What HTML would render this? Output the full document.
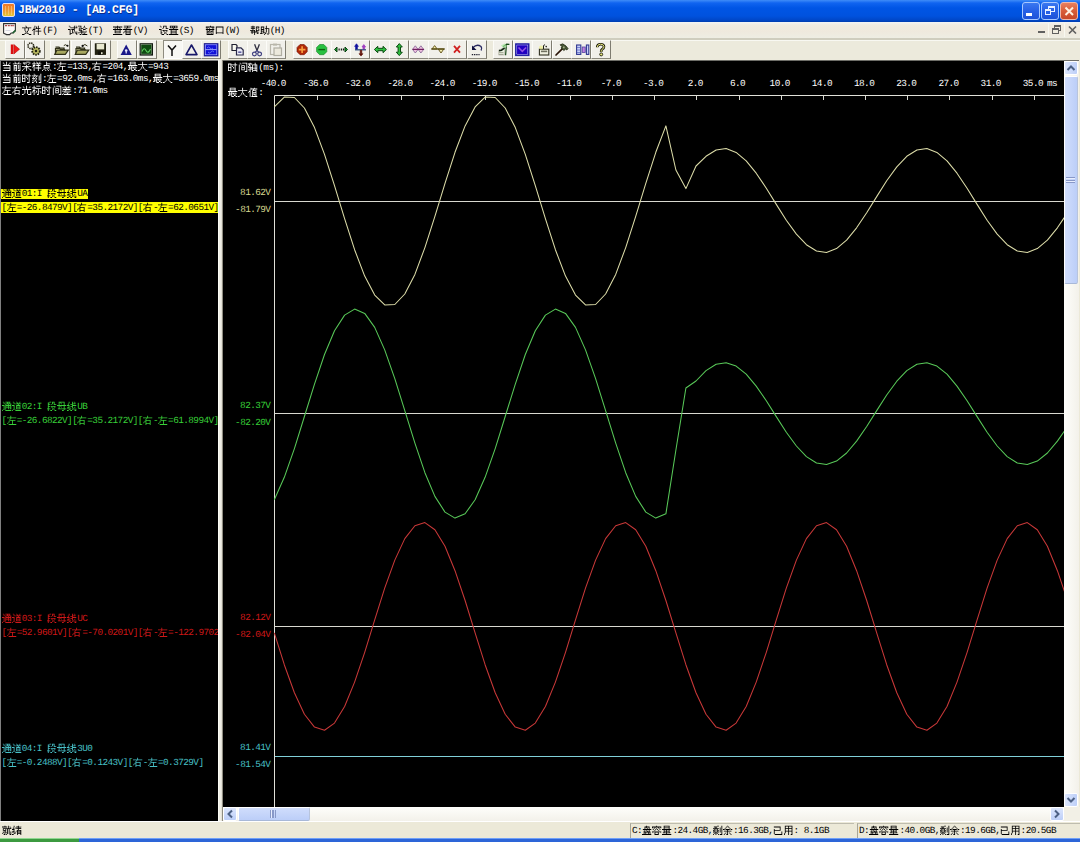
<!DOCTYPE html><html><head><meta charset="utf-8"><style>
*{margin:0;padding:0;box-sizing:border-box}
html,body{text-rendering:geometricPrecision;width:1080px;height:842px;overflow:hidden;background:#ECE9D8;font-family:"Liberation Sans",sans-serif}
.abs{position:absolute}
.t{position:absolute;white-space:pre;height:12px;line-height:12px;font-size:10px;font-family:"Liberation Mono",monospace}
.t svg.cj{display:inline-block;width:10.12px;height:12px;vertical-align:top;fill:currentColor}
.t .a{font-size:9.4px;letter-spacing:-0.58px;vertical-align:top;line-height:12px}
.btn{position:absolute;top:40px;width:20px;height:19px;background:#F1F0EA;border-right:1px solid #7E7C70;border-bottom:1px solid #8A887C;border-top:1px solid #FAFAF6;border-left:1px solid #FCFCF8}
#b7{background:#F8F8F4;border-top-color:#8E8C80;border-left-color:#8E8C80;border-right-color:#FFFFFF;border-bottom-color:#FFFFFF}
.btn svg{position:absolute;left:1px;top:1px}
</style></head><body>
<div class="abs" style="left:0;top:0;width:1080px;height:22px;background:linear-gradient(#3F8CF8 0px,#1064F0 3px,#0055E5 8px,#0052DE 16px,#0047C8 20px,#003CB0 22px)"></div>
<div class="abs" style="left:2px;top:3px;width:13px;height:14px;border:1px solid #E8E0F0;border-radius:2px;background:linear-gradient(#F07828,#F09830 55%,#E0C838)"><div class="abs" style="left:2px;top:2px;width:8px;height:9px;background:repeating-linear-gradient(90deg,rgba(255,220,160,.5) 0 1px,transparent 1px 3px)"></div></div>
<div class="abs" style="left:18px;top:2.6px;color:#fff;font:bold 11.6px/16px 'Liberation Mono',monospace;letter-spacing:-0.24px;white-space:pre;text-shadow:0.6px 0.6px 0 #0A2A8A">JBW2010 - [AB.CFG]</div>
<div class="abs" style="left:1022px;top:2px;width:18px;height:18px;border:1px solid #A8C8FF;border-radius:3px;background:linear-gradient(#3A78F0,#2660E6 50%,#1D52D8)"><div class="abs" style="left:3px;top:10px;width:6px;height:3px;background:#fff"></div></div>
<div class="abs" style="left:1041px;top:2px;width:18px;height:18px;border:1px solid #A8C8FF;border-radius:3px;background:linear-gradient(#3A78F0,#2660E6 50%,#1D52D8)"><div class="abs" style="left:6px;top:3px;width:7px;height:6px;border:1px solid #E8F0FF;border-top-width:2px"></div><div class="abs" style="left:3px;top:6px;width:6px;height:6px;border:1px solid #E8F0FF;border-top-width:2px;background:#2660E6"></div></div>
<div class="abs" style="left:1060px;top:2px;width:18px;height:18px;border:1px solid #F0B8A8;border-radius:3px;background:linear-gradient(#E88060,#D85C38 50%,#C84828)"><svg class="abs" style="left:2px;top:2px" width="12" height="12"><path d="M2.5 2.5L10 10M10 2.5L2.5 10" stroke="#FFF0E0" stroke-width="2"/></svg></div>
<div class="abs" style="left:0;top:22px;width:1080px;height:17px;background:linear-gradient(#F2F4F6 0px,#F1EBE0 3px,#EFE9DD 9px,#EEEDE3 16px);border-bottom:1px solid #CFCDBE"></div>
<svg class="abs" style="left:0;top:20px" width="20" height="18" viewBox="0 20 20 18"><path d="M3.6 23.6H15.4V30.6L13 33H11.2L9.6 34.6H6.6L3.6 33.2Z" fill="#FCFAF8" stroke="#303030" stroke-width="1.1"/><path d="M5 25.6h2M7.8 25.6h2M10.6 25.6h2.2M13.2 25.6h1" stroke="#B04848" stroke-width="1.3"/><path d="M5.5 30.5h5" stroke="#D8D8E0" stroke-width="1"/><path d="M12.6 33.2L15.6 30.4" stroke="#206030" stroke-width="1.6"/></svg>
<div class="t" style="left:22.0px;top:24.6px;color:#000;"><svg class="cj" viewBox="0 0.6 12 14.2"><use href="#u6587"/></svg><svg class="cj" viewBox="0 0.6 12 14.2"><use href="#u4ef6"/></svg><span class="a">(F)</span></div>
<div class="t" style="left:67.5px;top:24.6px;color:#000;"><svg class="cj" viewBox="0 0.6 12 14.2"><use href="#u8bd5"/></svg><svg class="cj" viewBox="0 0.6 12 14.2"><use href="#u9a8c"/></svg><span class="a">(T)</span></div>
<div class="t" style="left:112.5px;top:24.6px;color:#000;"><svg class="cj" viewBox="0 0.6 12 14.2"><use href="#u67e5"/></svg><svg class="cj" viewBox="0 0.6 12 14.2"><use href="#u770b"/></svg><span class="a">(V)</span></div>
<div class="t" style="left:158.5px;top:24.6px;color:#000;"><svg class="cj" viewBox="0 0.6 12 14.2"><use href="#u8bbe"/></svg><svg class="cj" viewBox="0 0.6 12 14.2"><use href="#u7f6e"/></svg><span class="a">(S)</span></div>
<div class="t" style="left:204.5px;top:24.6px;color:#000;"><svg class="cj" viewBox="0 0.6 12 14.2"><use href="#u7a97"/></svg><svg class="cj" viewBox="0 0.6 12 14.2"><use href="#u53e3"/></svg><span class="a">(W)</span></div>
<div class="t" style="left:249.5px;top:24.6px;color:#000;"><svg class="cj" viewBox="0 0.6 12 14.2"><use href="#u5e2e"/></svg><svg class="cj" viewBox="0 0.6 12 14.2"><use href="#u52a9"/></svg><span class="a">(H)</span></div>
<div class="abs" style="left:1038px;top:31px;width:7px;height:2px;background:#606060"></div>
<div class="abs" style="left:1054px;top:25px;width:7px;height:6px;border:1px solid #606060;border-top-width:2px"></div><div class="abs" style="left:1052px;top:28px;width:7px;height:6px;border:1px solid #606060;border-top-width:2px;background:#EFECE0"></div>
<svg class="abs" style="left:1068px;top:25px" width="9" height="9"><path d="M1 1.5L8 8.5M8 1.5L1 8.5" stroke="#606060" stroke-width="1.6"/></svg>
<div class="abs" style="left:1048px;top:23px;width:1px;height:14px;background:#F8F8F0"></div><div class="abs" style="left:1064px;top:23px;width:1px;height:14px;background:#F8F8F0"></div>
<div class="abs" style="left:0;top:39px;width:1080px;height:21px;background:#ECEADC;border-top:1px solid #CFCDBE"></div><div class="abs" style="left:0;top:40px;width:1080px;height:1px;background:#F8F8F2"></div>
<div class="btn" style="left:5px" id="b0"></div>
<div class="btn" style="left:25px" id="b1"></div>
<div class="btn" style="left:50px" id="b2"></div>
<div class="btn" style="left:71px" id="b3"></div>
<div class="btn" style="left:91px" id="b4"></div>
<div class="btn" style="left:117px" id="b5"></div>
<div class="btn" style="left:137px" id="b6"></div>
<div class="btn" style="left:163px" id="b7"></div>
<div class="btn" style="left:182px" id="b8"></div>
<div class="btn" style="left:201px" id="b9"></div>
<div class="btn" style="left:228px" id="b10"></div>
<div class="btn" style="left:247px" id="b11"></div>
<div class="btn" style="left:266px" id="b12"></div>
<div class="btn" style="left:293px" id="b13"></div>
<div class="btn" style="left:312px" id="b14"></div>
<div class="btn" style="left:331px" id="b15"></div>
<div class="btn" style="left:350px" id="b16"></div>
<div class="btn" style="left:370px" id="b17"></div>
<div class="btn" style="left:389px" id="b18"></div>
<div class="btn" style="left:409px" id="b19"></div>
<div class="btn" style="left:428px" id="b20"></div>
<div class="btn" style="left:447px" id="b21"></div>
<div class="btn" style="left:467px" id="b22"></div>
<div class="btn" style="left:493px" id="b23"></div>
<div class="btn" style="left:513px" id="b24"></div>
<div class="btn" style="left:532px" id="b25"></div>
<div class="btn" style="left:552px" id="b26"></div>
<div class="btn" style="left:571px" id="b27"></div>
<div class="btn" style="left:591px" id="b28"></div>
<svg class="abs" style="left:0;top:37px" width="620" height="25" viewBox="0 37 620 25"><rect x="10.8" y="44.5" width="2.4" height="9.5" fill="#D81010"/><path d="M13.8 44.5L19.5 49.2L13.8 54Z" fill="#F01818" stroke="#B00000" stroke-width="0.6"/><circle cx="30.8" cy="45.8" r="2.8" fill="none" stroke="#2A2A18" stroke-width="1.6" stroke-dasharray="1.4 0.8"/><circle cx="36" cy="51" r="3.8" fill="#B8B860" stroke="#202010" stroke-width="1.8" stroke-dasharray="1.6 0.9"/><circle cx="36" cy="51" r="1.2" fill="#202010"/><path d="M55.5 47.2h3.5l1 1h4v1.5" fill="none" stroke="#303018" stroke-width="1.3"/><path d="M55.5 48.5h4l1 1h4v3.8h-9Z" fill="#E8E8B0" stroke="#303018" stroke-width="1.2"/><path d="M56.8 50.2h11.5l-3 4.2h-10.5Z" fill="#A8A860" stroke="#303018" stroke-width="1.2"/><path d="M63.8 45.6q2-2 3.5 0.4" fill="none" stroke="#303018" stroke-width="1"/><circle cx="67.5" cy="45.8" r="1" fill="#101010"/><path d="M76.0 47.2h3.5l1 1h4v1.5" fill="none" stroke="#303018" stroke-width="1.3"/><path d="M76.0 48.5h4l1 1h4v3.8h-9Z" fill="#E8E8B0" stroke="#303018" stroke-width="1.2"/><path d="M77.3 50.2h11.5l-3 4.2h-10.5Z" fill="#A8A860" stroke="#303018" stroke-width="1.2"/><path d="M83 45.6q1.6-2.4 4.4 0.4" fill="none" stroke="#303018" stroke-width="1"/><circle cx="82.6" cy="45.9" r="1.1" fill="#101010"/><rect x="94.8" y="43.3" width="11.2" height="11.6" fill="#202010"/><rect x="96.6" y="43.8" width="7.6" height="5.6" fill="#E8E8D0"/><rect x="98.2" y="51.4" width="4.8" height="3.5" fill="#101008"/><rect x="101" y="52.2" width="1.6" height="2" fill="#E0E0C8"/><path d="M126.2 44.6L131.8 54.9H120.6Z" fill="#1A1888"/><circle cx="126.2" cy="50.6" r="1.3" fill="#E8E8FF"/><rect x="125.6" y="51.5" width="1.2" height="2" fill="#E8E8FF"/><rect x="139.6" y="43.2" width="13.4" height="12.4" fill="#101810"/><rect x="141" y="44.5" width="10.6" height="9.6" fill="#0E4A10" stroke="#A8B8A0" stroke-width="0.5"/><path d="M142 51.5q2-5 4 -1t4.5 -1.5" fill="none" stroke="#60D060" stroke-width="1.1"/><path d="M168 45.5L172 50L176 45.5M172 50V56" fill="none" stroke="#101010" stroke-width="1.5"/><path d="M191.5 45L197 54.6H186Z" fill="none" stroke="#18186A" stroke-width="1.6" stroke-linejoin="round"/><rect x="204.2" y="43.6" width="13.8" height="12.4" fill="#0A0AC8" stroke="#202080" stroke-width="0.8"/><rect x="205.4" y="44.8" width="11.4" height="10" fill="#1010D8" stroke="#C0C8FF" stroke-width="0.6"/><path d="M205.5 49.6H216.5" stroke="#C0C8FF" stroke-width="0.8"/><path d="M207 48q1.5-2 3 0t3 0M208 52q1.5 2 3 0t3 0" fill="none" stroke="#8090FF" stroke-width="0.7"/><path d="M232 44.5h4l1 1v5h-5Z" fill="#F8F8F0" stroke="#202030" stroke-width="1.2"/><path d="M236.5 47.8h4.5l2.2 2.2v5h-6.7Z" fill="#ECECF8" stroke="#282848" stroke-width="1.2"/><rect x="238.2" y="51.4" width="3.2" height="1.6" fill="#6060A0"/><path d="M254.6 44.2L257 50.5M259.4 44.2L257 50.5" stroke="#303040" stroke-width="1.3"/><circle cx="254.4" cy="54" r="1.9" fill="none" stroke="#404080" stroke-width="1.2"/><circle cx="259.6" cy="54" r="1.9" fill="none" stroke="#404080" stroke-width="1.2"/><path d="M257 50.5L255 52.5M257 50.5L259 52.5" stroke="#404080" stroke-width="1.1"/><rect x="270.5" y="44.5" width="9.5" height="10" fill="none" stroke="#B8B6AA" stroke-width="1.2"/><rect x="274" y="48" width="7.5" height="7.5" fill="#ECE9DC" stroke="#B0AEA2" stroke-width="1.2"/><rect x="273" y="43.6" width="4" height="2" fill="#B8B6AA"/><path d="M300 44.5h4.2l3 3v4.2l-3 3h-4.2l-3-3v-4.2Z" fill="#B02808" stroke="#701000" stroke-width="0.6"/><path d="M302.1 46.3V52.9M298.8 49.6H305.4" stroke="#F8A040" stroke-width="1.6"/><path d="M319.6 44.5h4.2l3 3v4.2l-3 3h-4.2l-3-3v-4.2Z" fill="#28C040" stroke="#108020" stroke-width="0.6"/><path d="M318.4 49.6H325" stroke="#0A6010" stroke-width="1.4"/><path d="M334.5 49.5l2.5-2.5v5Z M347.5 49.5l-2.5-2.5v5Z" fill="#18A030" stroke="#0A4010" stroke-width="1"/><path d="M338.5 49.5h1.2M340.8 49.5h1.4M343 49.5h1.2" stroke="#101810" stroke-width="1.8"/><path d="M356.5 43.8l-1.8 2.6h1v3h1.6v-3h1Z" fill="#1010A0" stroke="#1010A0" stroke-width="0.8"/><path d="M363.8 44.6l-1.8 2.3h1v2.5h1.6v-2.5h1Z" fill="#A040C0" stroke="#A040C0" stroke-width="0.8"/><path d="M355 49.8H366" stroke="#305080" stroke-width="1.3"/><path d="M360.2 50.2v3.5h-1.2l2 2.4l2-2.4h-1.2v-3.5Z" fill="#601008" stroke="#601008" stroke-width="0.6"/><path d="M374.4 49.5l3.4-3.2v2h5.2v-2l3.4 3.2l-3.4 3.2v-2h-5.2v2Z" fill="#30C040" stroke="#0A4A10" stroke-width="1"/><path d="M399.3 43.6l3 3.4h-1.8v5.2h1.8l-3 3.4l-3-3.4h1.8v-5.2h-1.8Z" fill="#30C040" stroke="#0A4A10" stroke-width="1"/><path d="M412.5 49.4l2.8-3.6l2.8 3.6l-2.8 3.6Z M418.1 49.4l2.8-3.6l2.8 3.6l-2.8 3.6Z" fill="#F0C0E0" stroke="#806090" stroke-width="0.8"/><path d="M412.5 49.4H424" stroke="#702060" stroke-width="1.2"/><path d="M432 49L434.6 45.6L437.2 49Z M438.2 49L441 53L443.8 49Z" fill="#F4F0B0" stroke="#6A5A20" stroke-width="1"/><path d="M431.2 49H444.8" stroke="#5A5018" stroke-width="1.4"/><path d="M454 45.8L460 52.6M460 45.8L454 52.6" stroke="#D02020" stroke-width="1.8"/><path d="M473 47.5q4-4 8 -1q1.5 2 0 4" fill="none" stroke="#282860" stroke-width="1.3"/><path d="M472 45.5v4.5h4.5Z" fill="#101040"/><path d="M471.8 54.6h1.4M474 54.6h1.4M476.2 54.6h1.4M478.4 54.6h1.2" stroke="#202030" stroke-width="1.2"/><path d="M498.6 50.5L504.5 47V55H498.6Z" fill="#E8F0E0" stroke="#A0A090" stroke-width="0.5"/><path d="M499 52.6h4.5M499 54.4h4.5" stroke="#909080" stroke-width="0.8"/><path d="M499 50.6L501.5 50.2L505 47.6" fill="none" stroke="#102010" stroke-width="1.6"/><path d="M503 46.8L506.6 44.2L509.4 44.4M506.4 45L505.6 55.2" fill="none" stroke="#184818" stroke-width="1.2"/><path d="M501 45.6l3.6-2l2.6 2.4l-3 2.4Z" fill="#A8E8A0" opacity="0.7"/><rect x="515.6" y="43.8" width="13.4" height="11.8" fill="#1A10A0" stroke="#2020A0" stroke-width="1"/><rect x="516.8" y="45" width="11" height="9.4" fill="#2000C0" stroke="#D0D0FF" stroke-width="0.5"/><path d="M518.5 47.5l3.8 3.8l3.8-3.8" fill="none" stroke="#9050E0" stroke-width="1.6"/><rect x="539.4" y="49.2" width="9.4" height="5.8" fill="#F0F0E0" stroke="#303020" stroke-width="1.1"/><rect x="541" y="50.6" width="6.2" height="1.6" fill="#707060"/><path d="M543.5 49v-3.3q0.5-1.4 1.6-0.6" fill="none" stroke="#202018" stroke-width="1"/><circle cx="546.2" cy="46.6" r="0.8" fill="#202018"/><circle cx="541" cy="47.5" r="2" fill="#F0F080" opacity="0.6"/><path d="M556 55L562.5 48.6" stroke="#2A1408" stroke-width="1.7" stroke-linecap="round"/><path d="M560.2 44.8l2.6-0.9l3.2 2.2l2 2.6l-1.2 1.2l-1.4-0.8l-1.6 1.4l-2.6-2.6l0.8-1.2Z" fill="#485838" stroke="#20280F" stroke-width="0.9"/><rect x="563" y="46.6" width="1.6" height="1.6" fill="#A8B088"/><rect x="576.6" y="45" width="4.2" height="9.4" fill="#C8D0F8" stroke="#303890" stroke-width="1.1"/><rect x="582.2" y="47" width="3" height="5.4" fill="#C080E0" stroke="#5040A0" stroke-width="0.8"/><rect x="586.4" y="45" width="2.4" height="9.4" fill="#C8D0F8" stroke="#303890" stroke-width="1.1"/><path d="M577 47.5h3.5M577 50h3.5M577 52.5h3.5" stroke="#5060C0" stroke-width="0.7"/><path d="M597.2 47.2q0-3 3.4-3t3.4 2.6q0 1.6-2 2.6q-0.8 0.5-0.8 1.8v0.8" fill="none" stroke="#181808" stroke-width="2.6"/><path d="M597.2 47.2q0-3 3.4-3t3.4 2.6q0 1.6-2 2.6q-0.8 0.5-0.8 1.8v0.8" fill="none" stroke="#E8E880" stroke-width="1"/><circle cx="601.2" cy="54.4" r="1.5" fill="#E8E880" stroke="#181808" stroke-width="0.9"/></svg>
<div class="abs" style="left:0;top:60px;width:218px;height:761px;background:#000;border-top:1px solid #808080;border-left:1px solid #808080"></div>
<div class="t" style="left:1.5px;top:61.0px;color:#fff;"><svg class="cj" viewBox="0 0.6 12 14.2"><use href="#u5f53"/></svg><svg class="cj" viewBox="0 0.6 12 14.2"><use href="#u524d"/></svg><svg class="cj" viewBox="0 0.6 12 14.2"><use href="#u91c7"/></svg><svg class="cj" viewBox="0 0.6 12 14.2"><use href="#u6837"/></svg><svg class="cj" viewBox="0 0.6 12 14.2"><use href="#u70b9"/></svg><span class="a">:</span><svg class="cj" viewBox="0 0.6 12 14.2"><use href="#u5de6"/></svg><span class="a">=133,</span><svg class="cj" viewBox="0 0.6 12 14.2"><use href="#u53f3"/></svg><span class="a">=204,</span><svg class="cj" viewBox="0 0.6 12 14.2"><use href="#u6700"/></svg><svg class="cj" viewBox="0 0.6 12 14.2"><use href="#u5927"/></svg><span class="a">=943</span></div>
<div class="t" style="left:1.5px;top:73.2px;color:#fff;"><svg class="cj" viewBox="0 0.6 12 14.2"><use href="#u5f53"/></svg><svg class="cj" viewBox="0 0.6 12 14.2"><use href="#u524d"/></svg><svg class="cj" viewBox="0 0.6 12 14.2"><use href="#u65f6"/></svg><svg class="cj" viewBox="0 0.6 12 14.2"><use href="#u523b"/></svg><span class="a">:</span><svg class="cj" viewBox="0 0.6 12 14.2"><use href="#u5de6"/></svg><span class="a">=92.0ms,</span><svg class="cj" viewBox="0 0.6 12 14.2"><use href="#u53f3"/></svg><span class="a">=163.0ms,</span><svg class="cj" viewBox="0 0.6 12 14.2"><use href="#u6700"/></svg><svg class="cj" viewBox="0 0.6 12 14.2"><use href="#u5927"/></svg><span class="a">=3659.0ms</span></div>
<div class="t" style="left:1.5px;top:85.4px;color:#fff;"><svg class="cj" viewBox="0 0.6 12 14.2"><use href="#u5de6"/></svg><svg class="cj" viewBox="0 0.6 12 14.2"><use href="#u53f3"/></svg><svg class="cj" viewBox="0 0.6 12 14.2"><use href="#u5149"/></svg><svg class="cj" viewBox="0 0.6 12 14.2"><use href="#u6807"/></svg><svg class="cj" viewBox="0 0.6 12 14.2"><use href="#u65f6"/></svg><svg class="cj" viewBox="0 0.6 12 14.2"><use href="#u95f4"/></svg><svg class="cj" viewBox="0 0.6 12 14.2"><use href="#u5dee"/></svg><span class="a">:71.0ms</span></div>
<div class="abs" style="left:1px;top:189.0px;width:86.5px;height:10px;background:#FFFF00"></div>
<div class="abs" style="left:1px;top:202.0px;width:217px;height:11px;background:#FFFF00"></div>
<div class="t" style="left:1.5px;top:188.0px;color:#000;"><svg class="cj" viewBox="0 0.6 12 14.2"><use href="#u901a"/></svg><svg class="cj" viewBox="0 0.6 12 14.2"><use href="#u9053"/></svg><span class="a">01:I </span><svg class="cj" viewBox="0 0.6 12 14.2"><use href="#u6bb5"/></svg><svg class="cj" viewBox="0 0.6 12 14.2"><use href="#u6bcd"/></svg><svg class="cj" viewBox="0 0.6 12 14.2"><use href="#u7ebf"/></svg><span class="a">UA</span></div>
<div class="t" style="left:1.5px;top:201.5px;color:#000;"><span class="a">[</span><svg class="cj" viewBox="0 0.6 12 14.2"><use href="#u5de6"/></svg><span class="a">=-26.8479V][</span><svg class="cj" viewBox="0 0.6 12 14.2"><use href="#u53f3"/></svg><span class="a">=35.2172V][</span><svg class="cj" viewBox="0 0.6 12 14.2"><use href="#u53f3"/></svg><span class="a">-</span><svg class="cj" viewBox="0 0.6 12 14.2"><use href="#u5de6"/></svg><span class="a">=62.0651V]</span></div>
<div class="t" style="left:1.5px;top:400.6px;color:#38D038;"><svg class="cj" viewBox="0 0.6 12 14.2"><use href="#u901a"/></svg><svg class="cj" viewBox="0 0.6 12 14.2"><use href="#u9053"/></svg><span class="a">02:I </span><svg class="cj" viewBox="0 0.6 12 14.2"><use href="#u6bb5"/></svg><svg class="cj" viewBox="0 0.6 12 14.2"><use href="#u6bcd"/></svg><svg class="cj" viewBox="0 0.6 12 14.2"><use href="#u7ebf"/></svg><span class="a">UB</span></div>
<div class="t" style="left:1.5px;top:414.6px;color:#38D038;"><span class="a">[</span><svg class="cj" viewBox="0 0.6 12 14.2"><use href="#u5de6"/></svg><span class="a">=-26.6822V][</span><svg class="cj" viewBox="0 0.6 12 14.2"><use href="#u53f3"/></svg><span class="a">=35.2172V][</span><svg class="cj" viewBox="0 0.6 12 14.2"><use href="#u53f3"/></svg><span class="a">-</span><svg class="cj" viewBox="0 0.6 12 14.2"><use href="#u5de6"/></svg><span class="a">=61.8994V]</span></div>
<div class="t" style="left:1.5px;top:613.4px;color:#D01818;"><svg class="cj" viewBox="0 0.6 12 14.2"><use href="#u901a"/></svg><svg class="cj" viewBox="0 0.6 12 14.2"><use href="#u9053"/></svg><span class="a">03:I </span><svg class="cj" viewBox="0 0.6 12 14.2"><use href="#u6bb5"/></svg><svg class="cj" viewBox="0 0.6 12 14.2"><use href="#u6bcd"/></svg><svg class="cj" viewBox="0 0.6 12 14.2"><use href="#u7ebf"/></svg><span class="a">UC</span></div>
<div class="t" style="left:1.5px;top:627.4px;color:#D01818;"><span class="a">[</span><svg class="cj" viewBox="0 0.6 12 14.2"><use href="#u5de6"/></svg><span class="a">=52.9601V][</span><svg class="cj" viewBox="0 0.6 12 14.2"><use href="#u53f3"/></svg><span class="a">=-70.0201V][</span><svg class="cj" viewBox="0 0.6 12 14.2"><use href="#u53f3"/></svg><span class="a">-</span><svg class="cj" viewBox="0 0.6 12 14.2"><use href="#u5de6"/></svg><span class="a">=-122.9702V]</span></div>
<div class="t" style="left:1.5px;top:743.1px;color:#48C0C8;"><svg class="cj" viewBox="0 0.6 12 14.2"><use href="#u901a"/></svg><svg class="cj" viewBox="0 0.6 12 14.2"><use href="#u9053"/></svg><span class="a">04:I </span><svg class="cj" viewBox="0 0.6 12 14.2"><use href="#u6bb5"/></svg><svg class="cj" viewBox="0 0.6 12 14.2"><use href="#u6bcd"/></svg><svg class="cj" viewBox="0 0.6 12 14.2"><use href="#u7ebf"/></svg><span class="a">3U0</span></div>
<div class="t" style="left:1.5px;top:757.1px;color:#48C0C8;"><span class="a">[</span><svg class="cj" viewBox="0 0.6 12 14.2"><use href="#u5de6"/></svg><span class="a">=-0.2488V][</span><svg class="cj" viewBox="0 0.6 12 14.2"><use href="#u53f3"/></svg><span class="a">=0.1243V][</span><svg class="cj" viewBox="0 0.6 12 14.2"><use href="#u53f3"/></svg><span class="a">-</span><svg class="cj" viewBox="0 0.6 12 14.2"><use href="#u5de6"/></svg><span class="a">=0.3729V]</span></div>
<div class="abs" style="left:218px;top:60px;width:5px;height:762px;background:linear-gradient(90deg,#FCFCF6 0 1px,#F0EFE6 1px 3px,#E4E2D8 3px 4px,#8E8C80 4px 5px)"></div>
<div class="abs" style="left:223px;top:60px;width:841px;height:747px;background:#000;border-top:1px solid #808080"></div>
<svg class="abs" style="left:223px;top:60px" width="841" height="747" shape-rendering="auto"><path d="M51.5 35.5H841 M51.5 35.5V747" stroke="#E0E0D8" stroke-width="1" fill="none"/><path d="M94.5 35.5V40.0" stroke="#D8D8D0" stroke-width="1"/><path d="M136.5 35.5V40.0" stroke="#D8D8D0" stroke-width="1"/><path d="M178.5 35.5V40.0" stroke="#D8D8D0" stroke-width="1"/><path d="M220.5 35.5V40.0" stroke="#D8D8D0" stroke-width="1"/><path d="M262.5 35.5V40.0" stroke="#D8D8D0" stroke-width="1"/><path d="M304.5 35.5V40.0" stroke="#D8D8D0" stroke-width="1"/><path d="M347.5 35.5V40.0" stroke="#D8D8D0" stroke-width="1"/><path d="M389.5 35.5V40.0" stroke="#D8D8D0" stroke-width="1"/><path d="M431.5 35.5V40.0" stroke="#D8D8D0" stroke-width="1"/><path d="M473.5 35.5V40.0" stroke="#D8D8D0" stroke-width="1"/><path d="M516.5 35.5V40.0" stroke="#D8D8D0" stroke-width="1"/><path d="M558.5 35.5V40.0" stroke="#D8D8D0" stroke-width="1"/><path d="M600.5 35.5V40.0" stroke="#D8D8D0" stroke-width="1"/><path d="M642.5 35.5V40.0" stroke="#D8D8D0" stroke-width="1"/><path d="M684.5 35.5V40.0" stroke="#D8D8D0" stroke-width="1"/><path d="M726.5 35.5V40.0" stroke="#D8D8D0" stroke-width="1"/><path d="M769.5 35.5V40.0" stroke="#D8D8D0" stroke-width="1"/><path d="M811.5 35.5V40.0" stroke="#D8D8D0" stroke-width="1"/><path d="M52.0 141.5H841" stroke="#D8D8D0" stroke-width="1"/><path d="M52.0 353.5H841" stroke="#D8D8D0" stroke-width="1"/><path d="M52.0 566.5H841" stroke="#D8D8D0" stroke-width="1"/><path d="M52.0 696.5H841" stroke="#D8D8D0" stroke-width="1"/><path d="M51.3 46.9 L61.3 37.1 L71.4 37.5 L81.4 48.0 L91.5 67.6 L101.5 94.4 L111.5 125.7 L121.6 158.6 L131.6 189.7 L141.7 216.1 L151.7 235.1 L161.7 244.9 L171.8 244.5 L181.8 234.0 L191.9 214.4 L201.9 187.6 L211.9 156.3 L222.0 123.4 L232.0 92.3 L242.1 65.9 L252.1 46.9 L262.1 37.1 L272.2 37.5 L282.2 48.0 L292.3 67.6 L302.3 94.4 L312.3 125.7 L322.4 158.6 L332.4 189.7 L342.5 216.1 L352.5 235.1 L362.5 244.9 L372.6 244.5 L382.6 234.0 L392.7 214.4 L402.7 187.6 L412.7 156.3 L422.8 123.4 L432.8 92.3 L442.9 65.9 L452.9 110.0 L462.9 128.6 L473.0 106.0 L483.0 96.3 L493.1 90.0 L503.1 88.6 L513.1 92.4 L523.2 100.8 L533.2 113.2 L543.3 128.2 L553.3 144.4 L563.3 160.2 L573.4 174.1 L583.4 184.7 L593.5 191.0 L603.5 192.4 L613.5 188.6 L623.6 180.2 L633.6 167.8 L643.7 152.8 L653.7 136.6 L663.7 120.8 L673.8 106.9 L683.8 96.3 L693.9 90.0 L703.9 88.6 L713.9 92.4 L724.0 100.8 L734.0 113.2 L744.1 128.2 L754.1 144.4 L764.1 160.2 L774.2 174.1 L784.2 184.7 L794.3 191.0 L804.3 192.4 L814.3 188.6 L824.4 180.2 L834.4 167.8 L844.5 152.8" stroke="#DCDCA8" stroke-width="1.05" fill="none" stroke-linejoin="round"/><path d="M51.3 439.8 L61.3 417.3 L71.4 388.6 L81.4 356.5 L91.5 324.1 L101.5 294.5 L111.5 270.8 L121.6 255.1 L131.6 249.1 L141.7 253.4 L151.7 267.4 L161.7 289.9 L171.8 318.6 L181.8 350.7 L191.9 383.1 L201.9 412.7 L211.9 436.4 L222.0 452.1 L232.0 458.1 L242.1 453.8 L252.1 439.8 L262.1 417.3 L272.2 388.6 L282.2 356.5 L292.3 324.1 L302.3 294.5 L312.3 270.8 L322.4 255.1 L332.4 249.1 L342.5 253.4 L352.5 267.4 L362.5 289.9 L372.6 318.6 L382.6 350.7 L392.7 383.1 L402.7 412.7 L412.7 436.4 L422.8 452.1 L432.8 458.1 L442.9 453.8 L452.9 390.0 L462.9 328.0 L473.0 321.0 L483.0 310.6 L493.1 304.2 L503.1 302.7 L513.1 306.1 L523.2 314.2 L533.2 326.1 L543.3 340.7 L553.3 356.6 L563.3 372.2 L573.4 386.0 L583.4 396.6 L593.5 403.0 L603.5 404.5 L613.5 401.1 L623.6 393.0 L633.6 381.1 L643.7 366.5 L653.7 350.6 L663.7 335.0 L673.8 321.2 L683.8 310.6 L693.9 304.2 L703.9 302.7 L713.9 306.1 L724.0 314.2 L734.0 326.1 L744.1 340.7 L754.1 356.6 L764.1 372.2 L774.2 386.0 L784.2 396.6 L794.3 403.0 L804.3 404.5 L814.3 401.1 L824.4 393.0 L834.4 381.1 L844.5 366.5" stroke="#58C858" stroke-width="1.05" fill="none" stroke-linejoin="round"/><path d="M51.3 572.9 L61.3 604.7 L71.4 632.7 L81.4 654.2 L91.5 667.1 L101.5 670.2 L111.5 663.1 L121.6 646.5 L131.6 622.1 L141.7 592.3 L151.7 559.9 L161.7 528.1 L171.8 500.1 L181.8 478.6 L191.9 465.7 L201.9 462.6 L211.9 469.7 L222.0 486.3 L232.0 510.7 L242.1 540.5 L252.1 572.9 L262.1 604.7 L272.2 632.7 L282.2 654.2 L292.3 667.1 L302.3 670.2 L312.3 663.1 L322.4 646.5 L332.4 622.1 L342.5 592.3 L352.5 559.9 L362.5 528.1 L372.6 500.1 L382.6 478.6 L392.7 465.7 L402.7 462.6 L412.7 469.7 L422.8 486.3 L432.8 510.7 L442.9 540.5 L452.9 572.9 L462.9 604.7 L473.0 632.7 L483.0 654.2 L493.1 667.1 L503.1 670.2 L513.1 663.1 L523.2 646.5 L533.2 622.1 L543.3 592.3 L553.3 559.9 L563.3 528.1 L573.4 500.1 L583.4 478.6 L593.5 465.7 L603.5 462.6 L613.5 469.7 L623.6 486.3 L633.6 510.7 L643.7 540.5 L653.7 572.9 L663.7 604.7 L673.8 632.7 L683.8 654.2 L693.9 667.1 L703.9 670.2 L713.9 663.1 L724.0 646.5 L734.0 622.1 L744.1 592.3 L754.1 559.9 L764.1 528.1 L774.2 500.1 L784.2 478.6 L794.3 465.7 L804.3 462.6 L814.3 469.7 L824.4 486.3 L834.4 510.7 L844.5 540.5" stroke="#C83838" stroke-width="1.05" fill="none" stroke-linejoin="round"/><path d="M52.0 696.5H841" stroke="#80D0D8" stroke-width="1"/></svg>
<div class="t" style="left:228.0px;top:62.0px;color:#fff;"><svg class="cj" viewBox="0 0.6 12 14.2"><use href="#u65f6"/></svg><svg class="cj" viewBox="0 0.6 12 14.2"><use href="#u95f4"/></svg><svg class="cj" viewBox="0 0.6 12 14.2"><use href="#u8f74"/></svg><span class="a">(ms):</span></div>
<div class="t" style="left:228.0px;top:87.0px;color:#fff;"><svg class="cj" viewBox="0 0.6 12 14.2"><use href="#u6700"/></svg><svg class="cj" viewBox="0 0.6 12 14.2"><use href="#u5927"/></svg><svg class="cj" viewBox="0 0.6 12 14.2"><use href="#u503c"/></svg><span class="a">:</span></div>
<div class="t" style="left:260.7px;top:77.5px;color:#fff;"><span class="a">-40.0</span></div>
<div class="t" style="left:302.9px;top:77.5px;color:#fff;"><span class="a">-36.0</span></div>
<div class="t" style="left:345.1px;top:77.5px;color:#fff;"><span class="a">-32.0</span></div>
<div class="t" style="left:387.3px;top:77.5px;color:#fff;"><span class="a">-28.0</span></div>
<div class="t" style="left:429.5px;top:77.5px;color:#fff;"><span class="a">-24.0</span></div>
<div class="t" style="left:471.7px;top:77.5px;color:#fff;"><span class="a">-19.0</span></div>
<div class="t" style="left:513.9px;top:77.5px;color:#fff;"><span class="a">-15.0</span></div>
<div class="t" style="left:556.1px;top:77.5px;color:#fff;"><span class="a">-11.0</span></div>
<div class="t" style="left:600.8px;top:77.5px;color:#fff;"><span class="a">-7.0</span></div>
<div class="t" style="left:643.0px;top:77.5px;color:#fff;"><span class="a">-3.0</span></div>
<div class="t" style="left:687.7px;top:77.5px;color:#fff;"><span class="a">2.0</span></div>
<div class="t" style="left:729.9px;top:77.5px;color:#fff;"><span class="a">6.0</span></div>
<div class="t" style="left:769.6px;top:77.5px;color:#fff;"><span class="a">10.0</span></div>
<div class="t" style="left:811.8px;top:77.5px;color:#fff;"><span class="a">14.0</span></div>
<div class="t" style="left:854.0px;top:77.5px;color:#fff;"><span class="a">18.0</span></div>
<div class="t" style="left:896.2px;top:77.5px;color:#fff;"><span class="a">23.0</span></div>
<div class="t" style="left:938.4px;top:77.5px;color:#fff;"><span class="a">27.0</span></div>
<div class="t" style="left:980.6px;top:77.5px;color:#fff;"><span class="a">31.0</span></div>
<div class="t" style="left:1022.8px;top:77.5px;color:#fff;"><span class="a">35.0</span></div>
<div class="t" style="left:1047.0px;top:77.5px;color:#fff;"><span class="a">ms</span></div>
<div class="t" style="left:240.1px;top:187.0px;color:#D8D890;"><span class="a">81.62V</span></div>
<div class="t" style="left:235.1px;top:204.0px;color:#D8D890;"><span class="a">-81.79V</span></div>
<div class="t" style="left:240.1px;top:399.6px;color:#38D038;"><span class="a">82.37V</span></div>
<div class="t" style="left:235.1px;top:416.6px;color:#38D038;"><span class="a">-82.20V</span></div>
<div class="t" style="left:240.1px;top:612.4px;color:#D01818;"><span class="a">82.12V</span></div>
<div class="t" style="left:235.1px;top:629.4px;color:#D01818;"><span class="a">-82.04V</span></div>
<div class="t" style="left:240.1px;top:742.1px;color:#48C0C8;"><span class="a">81.41V</span></div>
<div class="t" style="left:235.1px;top:759.1px;color:#48C0C8;"><span class="a">-81.54V</span></div>
<div class="abs" style="left:1064px;top:61px;width:15px;height:746px;background:linear-gradient(90deg,#FEFEFB,#F3F1EA)"></div>
<div class="abs" style="left:1064px;top:61px;width:14px;height:14px;border:1px solid #fff;border-radius:2px;background:linear-gradient(90deg,#DCE6FD,#BDCFF8)"></div>
<svg class="abs" style="left:1066px;top:64px" width="10" height="8"><path d="M1.5 6L5 2.5L8.5 6" stroke="#4D6185" stroke-width="2" fill="none"/></svg>
<div class="abs" style="left:1064px;top:76px;width:14px;height:208px;border:1px solid #fff;border-radius:2px;border-right-color:#B8C4DC;border-bottom-color:#A8B8D8;background:linear-gradient(90deg,#D0DDFC,#BCCEF8)"></div>
<div class="abs" style="left:1066px;top:177px;width:9px;height:6px;background:repeating-linear-gradient(#8898C8 0 1px,#E8EEFF 1px 2px,transparent 2px 2.5px)"></div>
<div class="abs" style="left:1064px;top:793px;width:14px;height:14px;border:1px solid #fff;border-radius:2px;background:linear-gradient(90deg,#DCE6FD,#BDCFF8)"></div>
<svg class="abs" style="left:1066px;top:796px" width="10" height="8"><path d="M1.5 2L5 5.5L8.5 2" stroke="#4D6185" stroke-width="2" fill="none"/></svg>
<div class="abs" style="left:223px;top:807px;width:841px;height:14px;background:linear-gradient(#FEFEFB,#F3F1EA)"></div>
<div class="abs" style="left:223px;top:807px;width:14px;height:14px;border:1px solid #fff;border-radius:2px;background:linear-gradient(#DCE6FD,#BDCFF8)"></div>
<svg class="abs" style="left:226px;top:809px" width="8" height="10"><path d="M6 1.5L2.5 5L6 8.5" stroke="#4D6185" stroke-width="2" fill="none"/></svg>
<div class="abs" style="left:238px;top:807px;width:72px;height:14px;border:1px solid #fff;border-radius:2px;border-right-color:#B8C4DC;border-bottom-color:#A8B8D8;background:linear-gradient(#D0DDFC,#BCCEF8)"></div>
<div class="abs" style="left:270px;top:810px;width:6px;height:8px;background:repeating-linear-gradient(90deg,#8898C8 0 1px,#E8EEFF 1px 2px,transparent 2px 2.5px)"></div>
<div class="abs" style="left:1050px;top:807px;width:14px;height:14px;border:1px solid #fff;border-radius:2px;background:linear-gradient(#DCE6FD,#BDCFF8)"></div>
<svg class="abs" style="left:1053px;top:809px" width="8" height="10"><path d="M2 1.5L5.5 5L2 8.5" stroke="#4D6185" stroke-width="2" fill="none"/></svg>
<div class="abs" style="left:1064px;top:807px;width:16px;height:14px;background:#F2F0E6"></div>
<div class="abs" style="left:223px;top:60px;width:856px;height:1px;background:#6E6E68"></div>
<div class="abs" style="left:0;top:821px;width:1080px;height:17px;background:#ECE9D8;border-top:1px solid #FFFFFF"></div>
<div class="t" style="left:1.5px;top:824.5px;color:#000;"><svg class="cj" viewBox="0 0.6 12 14.2"><use href="#u5c31"/></svg><svg class="cj" viewBox="0 0.6 12 14.2"><use href="#u7eea"/></svg></div>
<div class="abs" style="left:630px;top:823px;width:224px;height:15px;border-left:1px solid #A8A698;border-top:1px solid #BEBCAE"></div>
<div class="abs" style="left:857px;top:823px;width:223px;height:15px;border-left:1px solid #A8A698;border-top:1px solid #BEBCAE"></div>
<div class="t" style="left:632.0px;top:825.0px;color:#000;"><span class="a">C:</span><svg class="cj" viewBox="0 0.6 12 14.2"><use href="#u76d8"/></svg><svg class="cj" viewBox="0 0.6 12 14.2"><use href="#u5bb9"/></svg><svg class="cj" viewBox="0 0.6 12 14.2"><use href="#u91cf"/></svg><span class="a">:24.4GB,</span><svg class="cj" viewBox="0 0.6 12 14.2"><use href="#u5269"/></svg><svg class="cj" viewBox="0 0.6 12 14.2"><use href="#u4f59"/></svg><span class="a">:16.3GB,</span><svg class="cj" viewBox="0 0.6 12 14.2"><use href="#u5df2"/></svg><svg class="cj" viewBox="0 0.6 12 14.2"><use href="#u7528"/></svg><span class="a">: 8.1GB</span></div>
<div class="t" style="left:859.0px;top:825.0px;color:#000;"><span class="a">D:</span><svg class="cj" viewBox="0 0.6 12 14.2"><use href="#u76d8"/></svg><svg class="cj" viewBox="0 0.6 12 14.2"><use href="#u5bb9"/></svg><svg class="cj" viewBox="0 0.6 12 14.2"><use href="#u91cf"/></svg><span class="a">:40.0GB,</span><svg class="cj" viewBox="0 0.6 12 14.2"><use href="#u5269"/></svg><svg class="cj" viewBox="0 0.6 12 14.2"><use href="#u4f59"/></svg><span class="a">:19.6GB,</span><svg class="cj" viewBox="0 0.6 12 14.2"><use href="#u5df2"/></svg><svg class="cj" viewBox="0 0.6 12 14.2"><use href="#u7528"/></svg><span class="a">:20.5GB</span></div>
<div class="abs" style="left:0;top:838px;width:1080px;height:4px;background:#2D65D8;border-top:1px solid #6FA0F8"></div>
<div class="abs" style="left:0;top:838px;width:79px;height:4px;background:#3C9A40;border-top:1px solid #90D890"></div>
<svg width="0" height="0" style="position:absolute"><defs><symbol id="u4ef6" viewBox="0 0.6 12 14.2"><path d="M3 2h1v1h-1zM7 2h1v1h-1zM3 3h1v1h-1zM5 3h1v1h-1zM7 3h1v1h-1zM2 4h1v1h-1zM5 4h1v1h-1zM7 4h1v1h-1zM2 5h1v1h-1zM4 5h6v1h-6zM1 6h3v1h-3zM7 6h1v1h-1zM0 7h1v1h-1zM2 7h1v1h-1zM7 7h1v1h-1zM2 8h1v1h-1zM4 8h7v1h-7zM2 9h1v1h-1zM7 9h1v1h-1zM2 10h1v1h-1zM7 10h1v1h-1zM2 11h1v1h-1zM7 11h1v1h-1zM2 12h1v1h-1zM7 12h1v1h-1z"/></symbol><symbol id="u4f59" viewBox="0 0.6 12 14.2"><path d="M5 2h1v1h-1zM4 3h1v1h-1zM6 3h1v1h-1zM3 4h1v1h-1zM7 4h1v1h-1zM2 5h1v1h-1zM8 5h1v1h-1zM0 6h2v1h-2zM3 6h5v1h-5zM9 6h2v1h-2zM5 7h1v1h-1zM1 8h9v1h-9zM5 9h1v1h-1zM3 10h1v1h-1zM5 10h1v1h-1zM7 10h1v1h-1zM2 11h1v1h-1zM5 11h1v1h-1zM8 11h1v1h-1zM1 12h1v1h-1zM4 12h2v1h-2zM9 12h1v1h-1z"/></symbol><symbol id="u503c" viewBox="0 0.6 12 14.2"><path d="M3 2h1v1h-1zM7 2h1v1h-1zM3 3h8v1h-8zM2 4h1v1h-1zM6 4h1v1h-1zM2 5h1v1h-1zM5 5h5v1h-5zM1 6h2v1h-2zM5 6h1v1h-1zM9 6h1v1h-1zM0 7h1v1h-1zM2 7h1v1h-1zM5 7h5v1h-5zM2 8h1v1h-1zM5 8h1v1h-1zM9 8h1v1h-1zM2 9h1v1h-1zM5 9h3v1h-3zM9 9h1v1h-1zM2 10h1v1h-1zM5 10h1v1h-1zM7 10h3v1h-3zM2 11h1v1h-1zM5 11h1v1h-1zM9 11h1v1h-1zM2 12h1v1h-1zM4 12h7v1h-7z"/></symbol><symbol id="u5149" viewBox="0 0.6 12 14.2"><path d="M5 2h1v1h-1zM1 3h1v1h-1zM5 3h1v1h-1zM9 3h1v1h-1zM2 4h1v1h-1zM5 4h1v1h-1zM8 4h1v1h-1zM5 5h1v1h-1zM0 6h11v1h-11zM3 7h1v1h-1zM6 7h1v1h-1zM3 8h1v1h-1zM6 8h1v1h-1zM3 9h1v1h-1zM6 9h1v1h-1zM10 9h1v1h-1zM3 10h1v1h-1zM6 10h1v1h-1zM10 10h1v1h-1zM2 11h1v1h-1zM6 11h1v1h-1zM10 11h1v1h-1zM0 12h2v1h-2zM7 12h4v1h-4z"/></symbol><symbol id="u523b" viewBox="0 0.6 12 14.2"><path d="M2 2h1v1h-1zM10 2h1v1h-1zM3 3h1v1h-1zM10 3h1v1h-1zM0 4h7v1h-7zM8 4h1v1h-1zM10 4h1v1h-1zM2 5h1v1h-1zM5 5h1v1h-1zM8 5h1v1h-1zM10 5h1v1h-1zM1 6h1v1h-1zM4 6h1v1h-1zM8 6h1v1h-1zM10 6h1v1h-1zM0 7h4v1h-4zM5 7h1v1h-1zM8 7h1v1h-1zM10 7h1v1h-1zM2 8h1v1h-1zM5 8h1v1h-1zM8 8h1v1h-1zM10 8h1v1h-1zM1 9h1v1h-1zM4 9h1v1h-1zM8 9h1v1h-1zM10 9h1v1h-1zM0 10h1v1h-1zM3 10h2v1h-2zM10 10h1v1h-1zM2 11h1v1h-1zM5 11h1v1h-1zM10 11h1v1h-1zM0 12h2v1h-2zM5 12h1v1h-1zM8 12h3v1h-3z"/></symbol><symbol id="u524d" viewBox="0 0.6 12 14.2"><path d="M3 2h1v1h-1zM8 2h1v1h-1zM4 3h1v1h-1zM7 3h1v1h-1zM1 4h10v1h-10zM2 6h4v1h-4zM7 6h1v1h-1zM9 6h1v1h-1zM2 7h1v1h-1zM5 7h1v1h-1zM7 7h1v1h-1zM9 7h1v1h-1zM2 8h4v1h-4zM7 8h1v1h-1zM9 8h1v1h-1zM2 9h1v1h-1zM5 9h1v1h-1zM7 9h1v1h-1zM9 9h1v1h-1zM2 10h4v1h-4zM7 10h1v1h-1zM9 10h1v1h-1zM2 11h1v1h-1zM5 11h1v1h-1zM9 11h1v1h-1zM2 12h1v1h-1zM4 12h2v1h-2zM7 12h3v1h-3z"/></symbol><symbol id="u5269" viewBox="0 0.6 12 14.2"><path d="M5 2h2v1h-2zM10 2h1v1h-1zM1 3h4v1h-4zM10 3h1v1h-1zM3 4h1v1h-1zM8 4h1v1h-1zM10 4h1v1h-1zM0 5h7v1h-7zM8 5h1v1h-1zM10 5h1v1h-1zM1 6h1v1h-1zM3 6h1v1h-1zM5 6h1v1h-1zM8 6h1v1h-1zM10 6h1v1h-1zM0 7h2v1h-2zM3 7h1v1h-1zM5 7h2v1h-2zM8 7h1v1h-1zM10 7h1v1h-1zM1 8h1v1h-1zM3 8h1v1h-1zM5 8h1v1h-1zM8 8h1v1h-1zM10 8h1v1h-1zM0 9h2v1h-2zM3 9h1v1h-1zM5 9h2v1h-2zM8 9h1v1h-1zM10 9h1v1h-1zM2 10h3v1h-3zM10 10h1v1h-1zM1 11h1v1h-1zM3 11h1v1h-1zM5 11h1v1h-1zM10 11h1v1h-1zM0 12h1v1h-1zM3 12h1v1h-1zM6 12h1v1h-1zM8 12h3v1h-3z"/></symbol><symbol id="u52a9" viewBox="0 0.6 12 14.2"><path d="M7 2h1v1h-1zM1 3h4v1h-4zM7 3h1v1h-1zM1 4h1v1h-1zM4 4h1v1h-1zM7 4h1v1h-1zM1 5h1v1h-1zM4 5h1v1h-1zM6 5h5v1h-5zM1 6h4v1h-4zM7 6h1v1h-1zM10 6h1v1h-1zM1 7h1v1h-1zM4 7h1v1h-1zM7 7h1v1h-1zM10 7h1v1h-1zM1 8h4v1h-4zM7 8h1v1h-1zM10 8h1v1h-1zM1 9h1v1h-1zM4 9h1v1h-1zM7 9h1v1h-1zM10 9h1v1h-1zM1 10h1v1h-1zM3 10h4v1h-4zM10 10h1v1h-1zM0 11h3v1h-3zM6 11h1v1h-1zM8 11h1v1h-1zM10 11h1v1h-1zM5 12h1v1h-1zM9 12h1v1h-1z"/></symbol><symbol id="u53e3" viewBox="0 0.6 12 14.2"><path d="M1 3h9v1h-9zM1 4h1v1h-1zM9 4h1v1h-1zM1 5h1v1h-1zM9 5h1v1h-1zM1 6h1v1h-1zM9 6h1v1h-1zM1 7h1v1h-1zM9 7h1v1h-1zM1 8h1v1h-1zM9 8h1v1h-1zM1 9h1v1h-1zM9 9h1v1h-1zM1 10h9v1h-9zM1 11h1v1h-1zM9 11h1v1h-1z"/></symbol><symbol id="u53f3" viewBox="0 0.6 12 14.2"><path d="M5 2h1v1h-1zM5 3h1v1h-1zM0 4h11v1h-11zM4 5h1v1h-1zM3 6h1v1h-1zM3 7h6v1h-6zM2 8h2v1h-2zM8 8h1v1h-1zM1 9h1v1h-1zM3 9h1v1h-1zM8 9h1v1h-1zM0 10h1v1h-1zM3 10h1v1h-1zM8 10h1v1h-1zM3 11h6v1h-6zM3 12h1v1h-1zM8 12h1v1h-1z"/></symbol><symbol id="u5927" viewBox="0 0.6 12 14.2"><path d="M5 2h1v1h-1zM5 3h1v1h-1zM5 4h1v1h-1zM0 5h11v1h-11zM5 6h1v1h-1zM5 7h1v1h-1zM4 8h1v1h-1zM6 8h1v1h-1zM4 9h1v1h-1zM6 9h1v1h-1zM3 10h1v1h-1zM7 10h1v1h-1zM2 11h1v1h-1zM8 11h1v1h-1zM0 12h2v1h-2zM9 12h2v1h-2z"/></symbol><symbol id="u5bb9" viewBox="0 0.6 12 14.2"><path d="M5 2h1v1h-1zM0 3h11v1h-11zM0 4h1v1h-1zM3 4h1v1h-1zM7 4h1v1h-1zM10 4h1v1h-1zM2 5h1v1h-1zM5 5h1v1h-1zM8 5h1v1h-1zM1 6h1v1h-1zM4 6h1v1h-1zM6 6h1v1h-1zM9 6h1v1h-1zM3 7h1v1h-1zM7 7h1v1h-1zM2 8h1v1h-1zM8 8h1v1h-1zM0 9h2v1h-2zM3 9h5v1h-5zM9 9h2v1h-2zM3 10h1v1h-1zM7 10h1v1h-1zM3 11h1v1h-1zM7 11h1v1h-1zM3 12h5v1h-5z"/></symbol><symbol id="u5c31" viewBox="0 0.6 12 14.2"><path d="M3 2h1v1h-1zM7 2h1v1h-1zM0 3h6v1h-6zM7 3h1v1h-1zM9 3h1v1h-1zM7 4h1v1h-1zM10 4h1v1h-1zM1 5h10v1h-10zM1 6h1v1h-1zM4 6h1v1h-1zM6 6h1v1h-1zM8 6h1v1h-1zM1 7h4v1h-4zM6 7h1v1h-1zM8 7h1v1h-1zM3 8h1v1h-1zM6 8h1v1h-1zM8 8h1v1h-1zM1 9h1v1h-1zM3 9h2v1h-2zM6 9h1v1h-1zM8 9h1v1h-1zM10 9h1v1h-1zM1 10h1v1h-1zM3 10h1v1h-1zM5 10h2v1h-2zM8 10h1v1h-1zM10 10h1v1h-1zM0 11h1v1h-1zM3 11h1v1h-1zM6 11h1v1h-1zM8 11h1v1h-1zM10 11h1v1h-1zM2 12h2v1h-2zM5 12h1v1h-1zM9 12h2v1h-2z"/></symbol><symbol id="u5de6" viewBox="0 0.6 12 14.2"><path d="M4 2h1v1h-1zM4 3h1v1h-1zM0 4h11v1h-11zM4 5h1v1h-1zM3 6h1v1h-1zM3 7h7v1h-7zM2 8h1v1h-1zM6 8h1v1h-1zM2 9h1v1h-1zM6 9h1v1h-1zM1 10h1v1h-1zM6 10h1v1h-1zM0 11h1v1h-1zM6 11h1v1h-1zM2 12h9v1h-9z"/></symbol><symbol id="u5dee" viewBox="0 0.6 12 14.2"><path d="M3 2h1v1h-1zM8 2h1v1h-1zM4 3h1v1h-1zM7 3h1v1h-1zM0 4h11v1h-11zM5 5h1v1h-1zM1 6h9v1h-9zM4 7h1v1h-1zM0 8h11v1h-11zM3 9h1v1h-1zM2 10h1v1h-1zM4 10h5v1h-5zM1 11h1v1h-1zM6 11h1v1h-1zM0 12h1v1h-1zM2 12h9v1h-9z"/></symbol><symbol id="u5df2" viewBox="0 0.6 12 14.2"><path d="M1 3h8v1h-8zM8 4h1v1h-1zM8 5h1v1h-1zM1 6h1v1h-1zM8 6h1v1h-1zM1 7h8v1h-8zM1 8h1v1h-1zM1 9h1v1h-1zM10 9h1v1h-1zM1 10h1v1h-1zM10 10h1v1h-1zM1 11h1v1h-1zM10 11h1v1h-1zM2 12h9v1h-9z"/></symbol><symbol id="u5e2e" viewBox="0 0.6 12 14.2"><path d="M3 2h1v1h-1zM1 3h5v1h-5zM7 3h4v1h-4zM3 4h1v1h-1zM7 4h1v1h-1zM10 4h1v1h-1zM1 5h5v1h-5zM7 5h1v1h-1zM9 5h1v1h-1zM3 6h1v1h-1zM7 6h1v1h-1zM10 6h1v1h-1zM0 7h6v1h-6zM7 7h4v1h-4zM2 8h1v1h-1zM5 8h1v1h-1zM7 8h1v1h-1zM1 9h9v1h-9zM2 10h1v1h-1zM5 10h1v1h-1zM9 10h1v1h-1zM2 11h1v1h-1zM5 11h1v1h-1zM8 11h2v1h-2zM5 12h1v1h-1z"/></symbol><symbol id="u5f53" viewBox="0 0.6 12 14.2"><path d="M5 2h1v1h-1zM1 3h1v1h-1zM5 3h1v1h-1zM9 3h1v1h-1zM2 4h1v1h-1zM5 4h1v1h-1zM8 4h1v1h-1zM3 5h1v1h-1zM5 5h1v1h-1zM7 5h1v1h-1zM1 6h9v1h-9zM9 7h1v1h-1zM9 8h1v1h-1zM2 9h8v1h-8zM9 10h1v1h-1zM9 11h1v1h-1zM1 12h9v1h-9z"/></symbol><symbol id="u6587" viewBox="0 0.6 12 14.2"><path d="M4 2h1v1h-1zM5 3h1v1h-1zM0 4h11v1h-11zM3 5h1v1h-1zM7 5h1v1h-1zM3 6h1v1h-1zM7 6h1v1h-1zM3 7h1v1h-1zM7 7h1v1h-1zM4 8h1v1h-1zM6 8h1v1h-1zM4 9h1v1h-1zM6 9h1v1h-1zM5 10h1v1h-1zM3 11h2v1h-2zM6 11h2v1h-2zM0 12h3v1h-3zM8 12h3v1h-3z"/></symbol><symbol id="u65f6" viewBox="0 0.6 12 14.2"><path d="M8 2h1v1h-1zM0 3h4v1h-4zM8 3h1v1h-1zM0 4h1v1h-1zM3 4h8v1h-8zM0 5h1v1h-1zM3 5h1v1h-1zM8 5h1v1h-1zM0 6h1v1h-1zM3 6h1v1h-1zM5 6h1v1h-1zM8 6h1v1h-1zM0 7h4v1h-4zM6 7h1v1h-1zM8 7h1v1h-1zM0 8h1v1h-1zM3 8h1v1h-1zM6 8h1v1h-1zM8 8h1v1h-1zM0 9h1v1h-1zM3 9h1v1h-1zM8 9h1v1h-1zM0 10h1v1h-1zM3 10h1v1h-1zM8 10h1v1h-1zM0 11h4v1h-4zM8 11h1v1h-1zM6 12h3v1h-3z"/></symbol><symbol id="u6700" viewBox="0 0.6 12 14.2"><path d="M2 2h7v1h-7zM2 3h1v1h-1zM8 3h1v1h-1zM2 4h7v1h-7zM2 5h1v1h-1zM8 5h1v1h-1zM0 6h11v1h-11zM1 7h1v1h-1zM4 7h1v1h-1zM1 8h9v1h-9zM1 9h1v1h-1zM4 9h1v1h-1zM6 9h1v1h-1zM9 9h1v1h-1zM1 10h4v1h-4zM7 10h2v1h-2zM0 11h2v1h-2zM4 11h1v1h-1zM7 11h2v1h-2zM4 12h3v1h-3zM9 12h2v1h-2z"/></symbol><symbol id="u67e5" viewBox="0 0.6 12 14.2"><path d="M5 2h1v1h-1zM0 3h11v1h-11zM3 4h1v1h-1zM5 4h1v1h-1zM7 4h1v1h-1zM2 5h1v1h-1zM5 5h1v1h-1zM8 5h1v1h-1zM0 6h11v1h-11zM2 7h1v1h-1zM8 7h1v1h-1zM2 8h7v1h-7zM2 9h1v1h-1zM8 9h1v1h-1zM2 10h7v1h-7zM0 12h11v1h-11z"/></symbol><symbol id="u6807" viewBox="0 0.6 12 14.2"><path d="M2 2h1v1h-1zM5 2h5v1h-5zM2 3h1v1h-1zM0 4h5v1h-5zM2 5h1v1h-1zM4 5h7v1h-7zM2 6h1v1h-1zM7 6h1v1h-1zM1 7h3v1h-3zM7 7h1v1h-1zM1 8h2v1h-2zM5 8h1v1h-1zM7 8h1v1h-1zM9 8h1v1h-1zM0 9h1v1h-1zM2 9h1v1h-1zM5 9h1v1h-1zM7 9h1v1h-1zM10 9h1v1h-1zM2 10h1v1h-1zM4 10h1v1h-1zM7 10h1v1h-1zM10 10h1v1h-1zM2 11h1v1h-1zM7 11h1v1h-1zM2 12h1v1h-1zM6 12h2v1h-2z"/></symbol><symbol id="u6837" viewBox="0 0.6 12 14.2"><path d="M2 2h1v1h-1zM5 2h1v1h-1zM9 2h1v1h-1zM2 3h1v1h-1zM6 3h1v1h-1zM8 3h1v1h-1zM0 4h11v1h-11zM2 5h1v1h-1zM7 5h1v1h-1zM1 6h3v1h-3zM5 6h5v1h-5zM1 7h2v1h-2zM7 7h1v1h-1zM0 8h1v1h-1zM2 8h1v1h-1zM7 8h1v1h-1zM2 9h1v1h-1zM4 9h7v1h-7zM2 10h1v1h-1zM7 10h1v1h-1zM2 11h1v1h-1zM7 11h1v1h-1zM2 12h1v1h-1zM7 12h1v1h-1z"/></symbol><symbol id="u6bb5" viewBox="0 0.6 12 14.2"><path d="M3 2h2v1h-2zM6 2h3v1h-3zM1 3h2v1h-2zM6 3h1v1h-1zM8 3h1v1h-1zM1 4h1v1h-1zM6 4h1v1h-1zM8 4h1v1h-1zM1 5h3v1h-3zM5 5h1v1h-1zM8 5h3v1h-3zM1 6h1v1h-1zM1 7h3v1h-3zM5 7h5v1h-5zM1 8h1v1h-1zM5 8h1v1h-1zM9 8h1v1h-1zM1 9h1v1h-1zM6 9h1v1h-1zM8 9h1v1h-1zM0 10h4v1h-4zM7 10h1v1h-1zM1 11h1v1h-1zM6 11h1v1h-1zM8 11h1v1h-1zM1 12h1v1h-1zM4 12h2v1h-2zM9 12h2v1h-2z"/></symbol><symbol id="u6bcd" viewBox="0 0.6 12 14.2"><path d="M2 2h7v1h-7zM2 3h1v1h-1zM4 3h1v1h-1zM8 3h1v1h-1zM2 4h1v1h-1zM5 4h1v1h-1zM8 4h1v1h-1zM2 5h1v1h-1zM8 5h1v1h-1zM0 6h11v1h-11zM2 7h1v1h-1zM4 7h1v1h-1zM8 7h1v1h-1zM2 8h1v1h-1zM5 8h1v1h-1zM8 8h1v1h-1zM2 9h1v1h-1zM8 9h1v1h-1zM1 10h10v1h-10zM8 11h1v1h-1zM6 12h2v1h-2z"/></symbol><symbol id="u70b9" viewBox="0 0.6 12 14.2"><path d="M5 2h1v1h-1zM5 3h1v1h-1zM5 4h5v1h-5zM5 5h1v1h-1zM2 6h7v1h-7zM2 7h1v1h-1zM8 7h1v1h-1zM2 8h1v1h-1zM8 8h1v1h-1zM2 9h7v1h-7zM1 11h1v1h-1zM3 11h1v1h-1zM6 11h1v1h-1zM9 11h1v1h-1zM0 12h1v1h-1zM4 12h1v1h-1zM7 12h1v1h-1zM10 12h1v1h-1z"/></symbol><symbol id="u7528" viewBox="0 0.6 12 14.2"><path d="M1 2h9v1h-9zM1 3h1v1h-1zM5 3h1v1h-1zM9 3h1v1h-1zM1 4h1v1h-1zM5 4h1v1h-1zM9 4h1v1h-1zM1 5h9v1h-9zM1 6h1v1h-1zM5 6h1v1h-1zM9 6h1v1h-1zM1 7h1v1h-1zM5 7h1v1h-1zM9 7h1v1h-1zM1 8h9v1h-9zM1 9h1v1h-1zM5 9h1v1h-1zM9 9h1v1h-1zM1 10h1v1h-1zM5 10h1v1h-1zM9 10h1v1h-1zM0 11h1v1h-1zM5 11h1v1h-1zM9 11h1v1h-1zM0 12h1v1h-1zM5 12h1v1h-1zM8 12h2v1h-2z"/></symbol><symbol id="u76d8" viewBox="0 0.6 12 14.2"><path d="M5 2h1v1h-1zM3 3h6v1h-6zM3 4h1v1h-1zM5 4h1v1h-1zM8 4h1v1h-1zM3 5h1v1h-1zM6 5h1v1h-1zM8 5h1v1h-1zM1 6h10v1h-10zM3 7h1v1h-1zM5 7h1v1h-1zM8 7h1v1h-1zM2 8h1v1h-1zM6 8h1v1h-1zM8 8h1v1h-1zM2 9h8v1h-8zM2 10h1v1h-1zM4 10h1v1h-1zM7 10h1v1h-1zM9 10h1v1h-1zM2 11h1v1h-1zM4 11h1v1h-1zM7 11h1v1h-1zM9 11h1v1h-1zM0 12h11v1h-11z"/></symbol><symbol id="u770b" viewBox="0 0.6 12 14.2"><path d="M1 2h9v1h-9zM5 3h1v1h-1zM1 4h8v1h-8zM4 5h1v1h-1zM0 6h11v1h-11zM3 7h1v1h-1zM8 7h1v1h-1zM2 8h7v1h-7zM1 9h1v1h-1zM3 9h1v1h-1zM8 9h1v1h-1zM0 10h1v1h-1zM3 10h6v1h-6zM3 11h1v1h-1zM8 11h1v1h-1zM3 12h6v1h-6z"/></symbol><symbol id="u7a97" viewBox="0 0.6 12 14.2"><path d="M6 2h1v1h-1zM1 3h10v1h-10zM1 4h1v1h-1zM3 4h1v1h-1zM8 4h1v1h-1zM10 4h1v1h-1zM2 5h1v1h-1zM5 5h1v1h-1zM9 5h1v1h-1zM1 6h10v1h-10zM2 7h1v1h-1zM5 7h1v1h-1zM9 7h1v1h-1zM2 8h1v1h-1zM4 8h6v1h-6zM2 9h3v1h-3zM7 9h1v1h-1zM9 9h1v1h-1zM2 10h1v1h-1zM5 10h2v1h-2zM9 10h1v1h-1zM2 11h1v1h-1zM4 11h1v1h-1zM7 11h1v1h-1zM9 11h1v1h-1zM2 12h8v1h-8z"/></symbol><symbol id="u7ebf" viewBox="0 0.6 12 14.2"><path d="M2 2h1v1h-1zM6 2h1v1h-1zM8 2h1v1h-1zM2 3h1v1h-1zM6 3h1v1h-1zM9 3h1v1h-1zM1 4h1v1h-1zM6 4h4v1h-4zM1 5h1v1h-1zM4 5h3v1h-3zM0 6h3v1h-3zM6 6h5v1h-5zM2 7h1v1h-1zM4 7h3v1h-3zM1 8h1v1h-1zM6 8h1v1h-1zM9 8h1v1h-1zM0 9h4v1h-4zM6 9h1v1h-1zM8 9h1v1h-1zM4 10h1v1h-1zM7 10h1v1h-1zM10 10h1v1h-1zM2 11h2v1h-2zM6 11h1v1h-1zM8 11h1v1h-1zM10 11h1v1h-1zM0 12h2v1h-2zM4 12h2v1h-2zM9 12h2v1h-2z"/></symbol><symbol id="u7eea" viewBox="0 0.6 12 14.2"><path d="M2 2h1v1h-1zM7 2h1v1h-1zM2 3h1v1h-1zM5 3h4v1h-4zM10 3h1v1h-1zM1 4h1v1h-1zM4 4h1v1h-1zM7 4h1v1h-1zM9 4h1v1h-1zM1 5h1v1h-1zM3 5h1v1h-1zM5 5h6v1h-6zM0 6h3v1h-3zM7 6h1v1h-1zM2 7h1v1h-1zM6 7h5v1h-5zM1 8h1v1h-1zM5 8h2v1h-2zM10 8h1v1h-1zM0 9h4v1h-4zM6 9h5v1h-5zM4 10h1v1h-1zM6 10h1v1h-1zM10 10h1v1h-1zM2 11h2v1h-2zM6 11h5v1h-5zM0 12h2v1h-2zM6 12h1v1h-1zM10 12h1v1h-1z"/></symbol><symbol id="u7f6e" viewBox="0 0.6 12 14.2"><path d="M1 2h9v1h-9zM1 3h1v1h-1zM4 3h1v1h-1zM6 3h1v1h-1zM9 3h1v1h-1zM1 4h9v1h-9zM5 5h1v1h-1zM0 6h11v1h-11zM2 7h1v1h-1zM8 7h1v1h-1zM2 8h7v1h-7zM2 9h1v1h-1zM8 9h1v1h-1zM2 10h7v1h-7zM2 11h1v1h-1zM8 11h1v1h-1zM0 12h11v1h-11z"/></symbol><symbol id="u8bbe" viewBox="0 0.6 12 14.2"><path d="M1 2h1v1h-1zM5 2h4v1h-4zM2 3h1v1h-1zM5 3h1v1h-1zM8 3h1v1h-1zM5 4h1v1h-1zM8 4h1v1h-1zM4 5h1v1h-1zM8 5h3v1h-3zM0 6h3v1h-3zM2 7h1v1h-1zM4 7h6v1h-6zM2 8h1v1h-1zM5 8h1v1h-1zM9 8h1v1h-1zM2 9h1v1h-1zM6 9h1v1h-1zM8 9h1v1h-1zM2 10h2v1h-2zM7 10h1v1h-1zM2 11h1v1h-1zM6 11h1v1h-1zM8 11h1v1h-1zM3 12h3v1h-3zM9 12h2v1h-2z"/></symbol><symbol id="u8bd5" viewBox="0 0.6 12 14.2"><path d="M1 2h1v1h-1zM7 2h1v1h-1zM9 2h1v1h-1zM2 3h1v1h-1zM7 3h1v1h-1zM10 3h1v1h-1zM3 4h8v1h-8zM7 5h1v1h-1zM0 6h3v1h-3zM4 6h4v1h-4zM2 7h1v1h-1zM5 7h1v1h-1zM7 7h1v1h-1zM2 8h1v1h-1zM5 8h1v1h-1zM7 8h1v1h-1zM2 9h1v1h-1zM5 9h1v1h-1zM8 9h1v1h-1zM10 9h1v1h-1zM2 10h1v1h-1zM5 10h2v1h-2zM8 10h1v1h-1zM10 10h1v1h-1zM2 11h3v1h-3zM9 11h2v1h-2zM2 12h1v1h-1zM10 12h1v1h-1z"/></symbol><symbol id="u8f74" viewBox="0 0.6 12 14.2"><path d="M2 2h1v1h-1zM8 2h1v1h-1zM0 3h5v1h-5zM8 3h1v1h-1zM1 4h1v1h-1zM5 4h6v1h-6zM1 5h2v1h-2zM5 5h1v1h-1zM8 5h1v1h-1zM10 5h1v1h-1zM0 6h1v1h-1zM2 6h1v1h-1zM5 6h1v1h-1zM8 6h1v1h-1zM10 6h1v1h-1zM0 7h6v1h-6zM8 7h1v1h-1zM10 7h1v1h-1zM2 8h1v1h-1zM5 8h6v1h-6zM2 9h4v1h-4zM8 9h1v1h-1zM10 9h1v1h-1zM0 10h3v1h-3zM5 10h1v1h-1zM8 10h1v1h-1zM10 10h1v1h-1zM2 11h1v1h-1zM5 11h6v1h-6zM2 12h1v1h-1zM5 12h1v1h-1zM10 12h1v1h-1z"/></symbol><symbol id="u901a" viewBox="0 0.6 12 14.2"><path d="M1 2h1v1h-1zM4 2h6v1h-6zM2 3h1v1h-1zM6 3h1v1h-1zM8 3h1v1h-1zM2 4h1v1h-1zM4 4h7v1h-7zM4 5h1v1h-1zM7 5h1v1h-1zM10 5h1v1h-1zM0 6h3v1h-3zM4 6h7v1h-7zM2 7h1v1h-1zM4 7h1v1h-1zM7 7h1v1h-1zM10 7h1v1h-1zM2 8h1v1h-1zM4 8h7v1h-7zM2 9h1v1h-1zM4 9h1v1h-1zM7 9h1v1h-1zM10 9h1v1h-1zM2 10h1v1h-1zM4 10h1v1h-1zM7 10h1v1h-1zM9 10h2v1h-2zM1 11h1v1h-1zM3 11h1v1h-1zM0 12h1v1h-1zM4 12h7v1h-7z"/></symbol><symbol id="u9053" viewBox="0 0.6 12 14.2"><path d="M1 2h1v1h-1zM5 2h1v1h-1zM9 2h1v1h-1zM2 3h1v1h-1zM6 3h1v1h-1zM8 3h1v1h-1zM2 4h1v1h-1zM4 4h7v1h-7zM7 5h1v1h-1zM0 6h3v1h-3zM5 6h5v1h-5zM2 7h1v1h-1zM5 7h1v1h-1zM9 7h1v1h-1zM2 8h1v1h-1zM5 8h5v1h-5zM2 9h1v1h-1zM5 9h1v1h-1zM9 9h1v1h-1zM2 10h1v1h-1zM5 10h5v1h-5zM1 11h1v1h-1zM3 11h1v1h-1zM0 12h1v1h-1zM4 12h7v1h-7z"/></symbol><symbol id="u91c7" viewBox="0 0.6 12 14.2"><path d="M5 2h4v1h-4zM1 3h4v1h-4zM9 3h1v1h-1zM2 4h1v1h-1zM5 4h1v1h-1zM8 4h1v1h-1zM3 5h1v1h-1zM7 5h1v1h-1zM5 6h1v1h-1zM0 7h11v1h-11zM4 8h3v1h-3zM3 9h1v1h-1zM5 9h1v1h-1zM7 9h1v1h-1zM2 10h1v1h-1zM5 10h1v1h-1zM8 10h1v1h-1zM1 11h1v1h-1zM5 11h1v1h-1zM9 11h2v1h-2zM0 12h1v1h-1zM5 12h1v1h-1zM10 12h1v1h-1z"/></symbol><symbol id="u91cf" viewBox="0 0.6 12 14.2"><path d="M2 2h7v1h-7zM2 3h1v1h-1zM8 3h1v1h-1zM2 4h7v1h-7zM2 5h1v1h-1zM8 5h1v1h-1zM0 6h11v1h-11zM2 7h1v1h-1zM5 7h1v1h-1zM8 7h1v1h-1zM2 8h7v1h-7zM2 9h1v1h-1zM5 9h1v1h-1zM8 9h1v1h-1zM1 10h9v1h-9zM5 11h1v1h-1zM0 12h11v1h-11z"/></symbol><symbol id="u95f4" viewBox="0 0.6 12 14.2"><path d="M2 2h1v1h-1zM5 2h6v1h-6zM3 3h1v1h-1zM10 3h1v1h-1zM1 4h1v1h-1zM10 4h1v1h-1zM1 5h1v1h-1zM4 5h4v1h-4zM10 5h1v1h-1zM1 6h1v1h-1zM4 6h1v1h-1zM7 6h1v1h-1zM10 6h1v1h-1zM1 7h1v1h-1zM4 7h4v1h-4zM10 7h1v1h-1zM1 8h1v1h-1zM4 8h1v1h-1zM7 8h1v1h-1zM10 8h1v1h-1zM1 9h1v1h-1zM4 9h1v1h-1zM7 9h1v1h-1zM10 9h1v1h-1zM1 10h1v1h-1zM4 10h4v1h-4zM10 10h1v1h-1zM1 11h1v1h-1zM10 11h1v1h-1zM1 12h1v1h-1zM8 12h3v1h-3z"/></symbol><symbol id="u9a8c" viewBox="0 0.6 12 14.2"><path d="M0 2h4v1h-4zM7 2h1v1h-1zM3 3h1v1h-1zM7 3h1v1h-1zM1 4h1v1h-1zM3 4h1v1h-1zM6 4h1v1h-1zM8 4h1v1h-1zM1 5h1v1h-1zM3 5h3v1h-3zM9 5h2v1h-2zM1 6h1v1h-1zM3 6h1v1h-1zM6 6h3v1h-3zM1 7h4v1h-4zM4 8h1v1h-1zM6 8h1v1h-1zM9 8h1v1h-1zM2 9h4v1h-4zM7 9h1v1h-1zM9 9h1v1h-1zM0 10h2v1h-2zM4 10h1v1h-1zM6 10h1v1h-1zM8 10h1v1h-1zM4 11h1v1h-1zM7 11h1v1h-1zM2 12h2v1h-2zM5 12h6v1h-6z"/></symbol></defs></svg>
</body></html>
